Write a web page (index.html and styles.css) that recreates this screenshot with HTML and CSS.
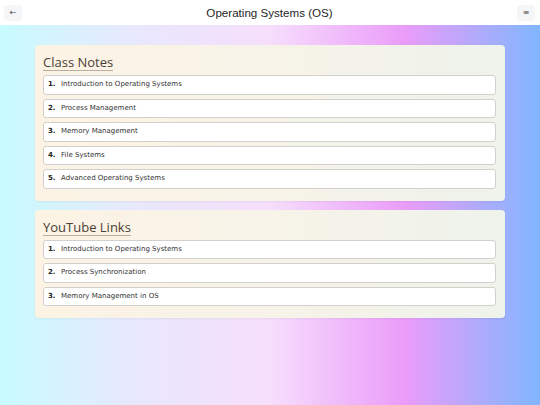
FILE: index.html
```html
<!DOCTYPE html>
<html>
<head>
<meta charset="utf-8">
<link rel="stylesheet" href="styles.css">
</head>
<body>
<header class="topbar">
  <button class="icon-btn">&#8592;</button>
  <h1 class="title">Operating Systems (OS)</h1>
  <button class="icon-btn">&#8801;</button>
</header>
<main class="content">
  <section class="card">
    <h2 class="card-title">Class Notes</h2>
    <ol class="list">
      <li class="item"><span class="num">1.</span><span class="label">Introduction to Operating Systems</span></li>
      <li class="item"><span class="num">2.</span><span class="label">Process Management</span></li>
      <li class="item"><span class="num">3.</span><span class="label">Memory Management</span></li>
      <li class="item"><span class="num">4.</span><span class="label">File Systems</span></li>
      <li class="item"><span class="num">5.</span><span class="label">Advanced Operating Systems</span></li>
    </ol>
  </section>
  <section class="card">
    <h2 class="card-title">YouTube Links</h2>
    <ol class="list">
      <li class="item"><span class="num">1.</span><span class="label">Introduction to Operating Systems</span></li>
      <li class="item"><span class="num">2.</span><span class="label">Process Synchronization</span></li>
      <li class="item"><span class="num">3.</span><span class="label">Memory Management in OS</span></li>
    </ol>
  </section>
</main>
</body>
</html>
```
FILE: styles.css
```css
html, body {
  margin: 0;
  padding: 0;
  height: 100%;
}
body {
  font-family: "DejaVu Sans", Verdana, sans-serif;
  display: flex;
  flex-direction: column;
  width: 540px;
  height: 405px;
  overflow: hidden;
}
.topbar {
  height: 25px;
  flex: none;
  background: #ffffff;
  display: flex;
  align-items: center;
  justify-content: space-between;
  padding: 0 5px 0 4px;
  box-sizing: border-box;
}
.icon-btn {
  width: 18px;
  height: 16px;
  border: none;
  border-radius: 3px;
  background: #f5f6f8;
  color: #444;
  font-size: 8px;
  padding: 0;
  display: flex;
  align-items: center;
  justify-content: center;
  font-family: "DejaVu Sans", sans-serif;
}
.title {
  margin: 0;
  font-family: "Liberation Sans", Arial, sans-serif;
  font-weight: normal;
  font-size: 11.6px;
  color: #1f1f1f;
}
.content {
  flex: 1;
  background: linear-gradient(90deg, #c8fbfe 0%, #e8e8fc 25%, #f6defc 50%, #ea9cf9 75%, #80b6ff 100%);
  padding: 20px 35px;
  display: flex;
  flex-direction: column;
  gap: 9px;
}
.card {
  background: linear-gradient(90deg, #fcf3e4 0%, #f7f3e8 50%, #eef3eb 100%);
  border-radius: 4px;
  padding: 7px 9px 12px 8px;
  box-shadow: 0 1px 2px rgba(0,0,0,0.05);
}
.card-title {
  display: inline-block;
  margin: 0 0 4px 0;
  font-family: "Open Sans", sans-serif;
  font-weight: normal;
  font-size: 13px;
  line-height: 15px;
  color: #4a4036;
  border-bottom: 1.5px solid #bcae9f;
}
.list {
  list-style: none;
  margin: 0;
  padding: 0;
  display: flex;
  flex-direction: column;
  gap: 4px;
}
.item {
  background: #ffffff;
  border: 1px solid #d2d0cc;
  border-radius: 3px;
  padding: 4px 5px 4px 4px;
  line-height: 9.5px;
  font-size: 7px;
  color: #333;
  display: flex;
}
.num {
  font-weight: bold;
  color: #222;
  width: 13px;
  flex: none;
}
```
